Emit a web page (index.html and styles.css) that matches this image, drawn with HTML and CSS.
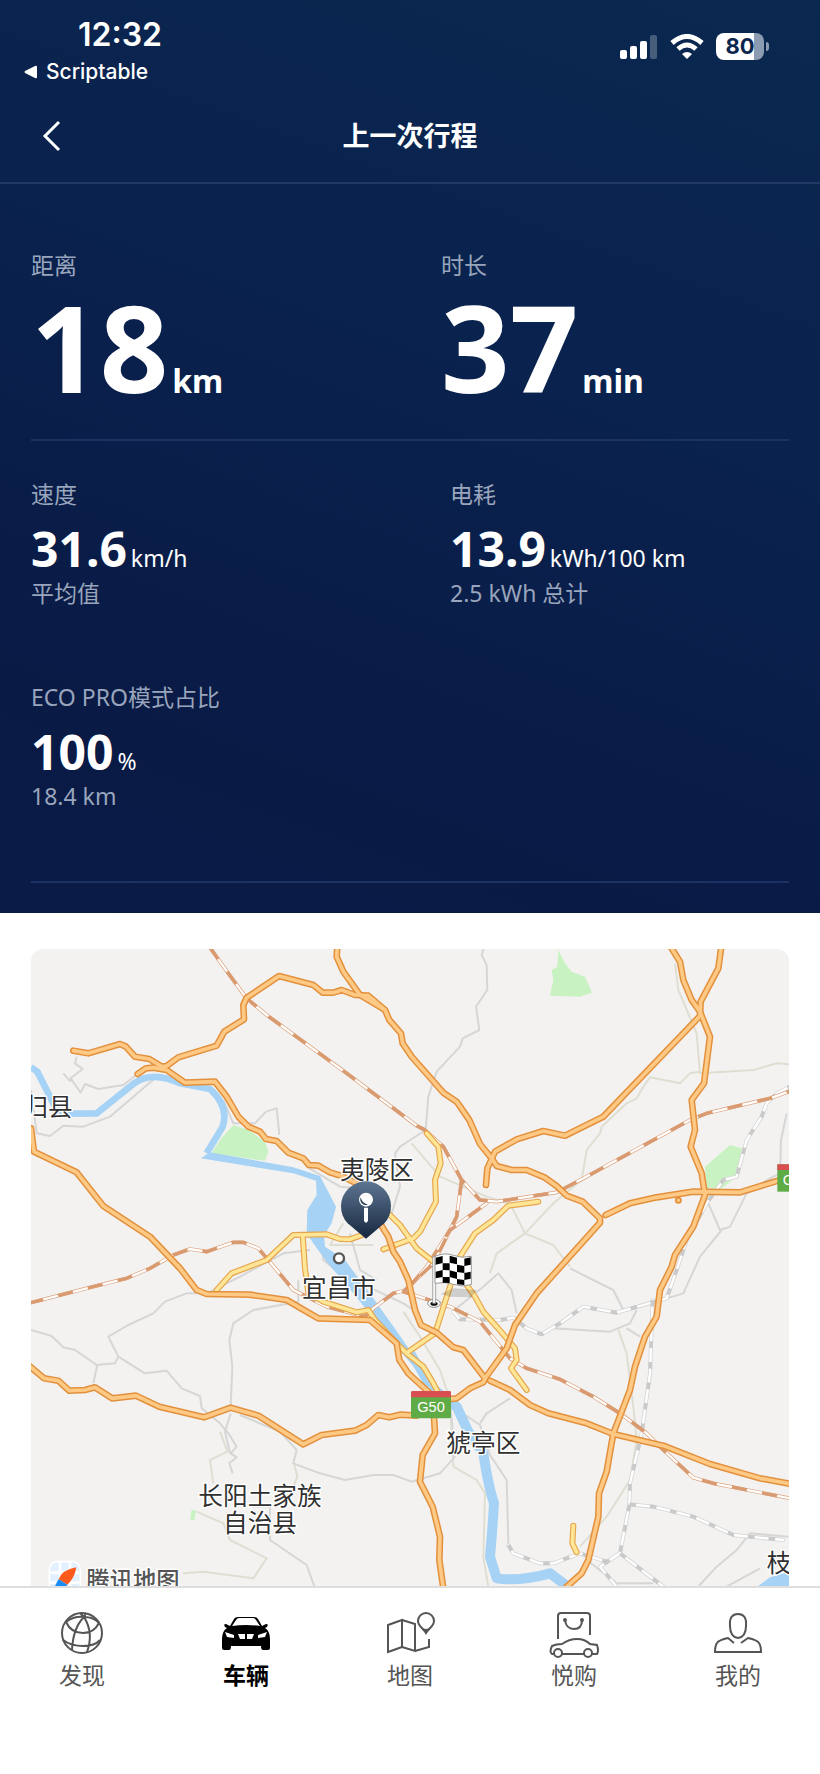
FILE: index.html
```html
<!DOCTYPE html>
<html lang="zh-CN">
<head>
  <meta charset="UTF-8">
  <meta name="viewport" content="width=device-width, initial-scale=1.0">
  <title>上一次行程</title>
  <link rel="stylesheet" href="styles.css">
</head>
<body>
  <div class="panel">
    <div class="status">
      <div class="status-left">
        <div class="time">12:32</div>
        <a class="back-app" href="#">
          <svg width="14" height="14" viewBox="0 0 14 14"><path d="M13 2v10q0 2-2 1L1 8q-1-1 0-2l10-5q2-1 2 1z" fill="#fff"/></svg>
          Scriptable
        </a>
      </div>
      <div class="status-right">
        <svg width="38" height="26" viewBox="0 0 38 26" fill="#fff">
          <rect x="0" y="16" width="7" height="9" rx="2"/>
          <rect x="10" y="12" width="7" height="13" rx="2"/>
          <rect x="20" y="7" width="7" height="18" rx="2"/>
          <rect x="30" y="1" width="7" height="24" rx="2" opacity=".25"/>
        </svg>
        <svg width="34" height="26" viewBox="0 0 34 26" fill="none" stroke="#fff" stroke-width="5">
          <path d="M2 9Q17-4 32 9"/>
          <path d="M8 15q9-8 18 0"/>
          <path d="M17 25l-5-5q5-4 10 0z" fill="#fff" stroke="none"/>
        </svg>
        <div class="battery"><span>80</span></div>
      </div>
    </div>

    <header class="header">
      <button class="back" aria-label="返回">
        <svg width="20" height="32" viewBox="0 0 20 32" fill="none" stroke="#fff" stroke-width="3"><path d="M17 2L3 16l14 14"/></svg>
      </button>
      <h1>上一次行程</h1>
    </header>

    <main class="stats">
      <section class="row row-main">
        <div>
          <div class="label">距离</div>
          <div class="big">18 <span>km</span></div>
        </div>
        <div>
          <div class="label">时长</div>
          <div class="big">37 <span>min</span></div>
        </div>
      </section>
      <section class="row row-detail">
        <div>
          <div class="label">速度</div>
          <div class="value">31.6 <span>km/h</span></div>
          <div class="label">平均值</div>
        </div>
        <div class="shifted">
          <div class="label">电耗</div>
          <div class="value">13.9 <span>kWh/100 km</span></div>
          <div class="label">2.5 kWh 总计</div>
        </div>
        <div>
          <div class="label">ECO PRO模式占比</div>
          <div class="value">100 <span>%</span></div>
          <div class="label">18.4 km</div>
        </div>
      </section>
    </main>
  </div>

  <div class="map">
    <svg viewBox="33 27 2274 1911">
      <defs>
        <linearGradient id="pinFill" x1="0" y1="0" x2="0" y2="1">
          <stop offset="0" stop-color="#5d7591"/>
          <stop offset="1" stop-color="#16263f"/>
        </linearGradient>
        <!-- roads are drawn twice: dark edge, then lighter fill -->
        <g id="highways">
          <path d="M160 332L205 340L300 312L318 320L345 350L388 357L425 380L440 378L475 352L590 317L613 275L672 238L670 195L680 173L777 108L880 135L908 158L940 158L965 150L1005 165L1045 167L1095 210L1108 240L1143 280L1148 310L1175 350L1270 458L1310 485L1348 540L1380 612L1415 655L1430 678L1475 690L1520 690L1575 713L1610 738L1640 767L1688 785L1740 835V848L1550 1060L1485 1155L1460 1225L1395 1315L1390 1327L1350 1345L1310 1375L1280 1378"/>
          <path d="M952 20L950 50L970 95L1020 165L1095 210"/>
          <path d="M353 402L378 385L400 383L440 390L495 428L585 425L620 470L655 530L685 560L720 575L738 597L770 603L805 638L850 655L867 675L895 677L930 697L965 708L1020 735L1080 850L1105 890L1120 935L1140 965L1165 1020L1185 1110L1203 1155L1250 1178L1300 1222L1330 1230L1395 1315"/>
          <path d="M33 565L42 635L170 697L250 798L390 890L480 985L530 1050L560 1062L690 1064L800 1080L895 1135L1050 1140L1130 1210L1138 1260L1165 1300L1230 1360L1242 1430L1245 1480L1208 1545L1200 1625L1238 1700L1260 1790L1258 1860L1270 1945"/>
          <path d="M25 1275L72 1315L115 1322L148 1352L195 1350L225 1342L277 1375L348 1367L418 1400L552 1432L632 1403L715 1427L850 1513L905 1485L1005 1472L1040 1455L1075 1425L1108 1432L1140 1424L1190 1427"/>
          <path d="M1952 20L1980 65L1990 120L2015 180L2040 215L2070 290L2052 430L2015 480L2025 570L2012 620L2045 700L2055 765L2020 860L1965 945L1955 980L1920 1050L1910 1130L1875 1190L1845 1280L1830 1350L1780 1480L1760 1595L1737 1660L1735 1730L1705 1860L1685 1900L1635 1945"/>
          <path d="M2104 20L2095 85L2042 185L2040 228L1750 530L1635 587L1570 573L1490 598L1425 635L1402 685L1398 735"/>
          <path d="M1757 825L1830 790L1910 772L2020 755L2160 757L2320 708"/>
          <path d="M1410 1322L1470 1350L1530 1395L1585 1420L1700 1450L1780 1482L1930 1517L2070 1572L2220 1615L2320 1633"/>
        </g>
        <g id="mainroads">
          <path d="M590 1050L635 1000L740 960L820 885L920 883L960 897L990 898L1040 880"/>
          <path d="M848 885L855 985L865 1060L910 1085L1010 1117L1045 1110L1065 1140L1130 1210L1160 1240L1210 1280L1240 1330L1260 1370"/>
          <path d="M1220 580L1255 620L1262 670L1245 720L1248 785L1200 875L1180 895L1090 928"/>
          <path d="M1110 825L1140 855L1190 925L1240 965"/>
          <path d="M1555 785L1465 797L1420 840L1365 880L1320 950L1290 1040L1245 1180L1165 1235"/>
          <path d="M1340 1035L1365 1070L1390 1115L1430 1160L1485 1225L1490 1260L1473 1285L1520 1350"/>
          <path d="M1660 1757L1657 1810L1670 1837"/>
        </g>
        <g id="rails">
          <path d="M568 20L625 100L680 175L740 225L980 400L1190 557L1215 570L1270 620L1325 720L1380 780L1430 785L1610 757L1685 718L2010 540L2060 520L2250 475L2320 450"/>
          <path d="M25 1090L200 1045L320 1015L390 985L460 945L510 927L560 935L640 907L670 907L715 925L770 990L820 1050L920 1100L1035 1130L1060 1105L1120 1060L1160 1050L1220 980L1290 870L1345 830L1400 790"/>
          <path d="M1325 720L1310 830L1240 970L1150 1055L1290 1100L1380 1145L1470 1255L1520 1285L1620 1318L1720 1370L1800 1420L1880 1480L1930 1530L2020 1613L2080 1630L2320 1677"/>
        </g>
        <g id="greyrails">
          <path d="M2320 435L2270 460L2240 490L2225 530L2180 600L2150 710L2110 720L2060 790L2000 900L1970 990L1940 1075L1870 1095L1790 1118L1690 1100L1620 1150L1565 1183L1520 1165L1480 1133L1440 1140L1320 1138L1300 1115"/>
          <path d="M1898 1080L1890 1300L1865 1480L1830 1630L1828 1695L1800 1840L1740 1880L1790 1940"/>
          <path d="M1828 1693L1900 1700L2020 1730L2140 1785L2290 1800"/>
          <path d="M1465 1815L1480 1840L1560 1870L1600 1870L1680 1840L1760 1865L1800 1840L1930 1940"/>
        </g>
      </defs>

      <g class="park">
        <path d="M640 555L685 570L735 605L745 635L735 662L575 640L600 600Z"/>
        <path d="M1615 30L1635 70L1655 95L1695 110L1716 158L1680 170L1590 167L1600 120L1595 90L1612 80Z"/>
        <path d="M2055 680L2130 615L2165 625L2150 710L2105 745H2060Z"/>
        <path d="M515 1708L528 1712L523 1742L510 1738Z"/>
      </g>

      <g class="street beige">
        <path d="M1965 70L1975 150L2030 280L2040 400L2200 390L2270 370L2307 373"/>
        <path d="M2040 395L2010 400L1980 430L1890 412L1870 440L1850 475L1820 490L1745 560L1740 580L1700 630L1685 720L1600 790L1515 880L1430 940L1410 1000"/>
        <path d="M1175 610L1260 710L1400 770L1470 790L1515 880L1600 915L1650 980"/>
        <path d="M1795 1170L1820 1240L1840 1400L1850 1500L1830 1620L1760 1730L1680 1820"/>
        <path d="M1150 1115L1200 1190L1260 1290L1290 1380L1300 1580L1370 1620L1395 1660L1390 1850L1405 1940"/>
        <path d="M600 1475L622 1535L570 1560L580 1630M822 1570L832 1610L820 1640"/>
        <path d="M530 1715L610 1750L630 1800L740 1855L700 1915L550 1895L490 1900"/>
        <path d="M970 850L930 915L1060 915"/>
      </g>
      <g class="street grey">
        <path d="M1392 20L1385 45L1400 75L1402 150L1368 200L1378 270L1328 295L1320 320L1250 395L1225 470L1217 570L1140 620L1125 640L1140 740L1115 820"/>
        <path d="M170 350L165 370L188 387L152 415L182 458L195 432L235 447L310 435L353 402M130 400L152 425"/>
        <path d="M33 450L50 580L90 588L130 557L190 560L270 530L340 470L410 410L480 432"/>
        <path d="M610 480L640 550L705 550L738 515L770 505L778 585"/>
        <path d="M860 680L960 740L1020 745"/>
        <path d="M33 1170L95 1188L130 1222L165 1230L230 1275L285 1270L295 1250L265 1190L325 1155L400 1120L435 1085L500 1060L560 1060L650 1015L790 940L870 930"/>
        <path d="M295 1250L375 1300L440 1292L485 1345L540 1368L545 1405L600 1450L625 1480L650 1520L632 1540L650 1552L628 1570L638 1600"/>
        <path d="M232 1275L220 1330M632 1420L615 1475L630 1540"/>
        <path d="M632 1400L637 1280L628 1200L640 1150L700 1110L835 1085V1020"/>
        <path d="M660 1425L780 1475L830 1530L820 1570L900 1600L975 1620L1060 1605L1120 1605L1175 1625L1260 1600L1305 1550L1290 1380"/>
        <path d="M700 1700H750V1800L860 1875L885 1945"/>
        <path d="M1290 1395L1380 1455L1410 1545L1460 1620L1465 1810M1380 1450L1400 1420L1470 1375"/>
        <path d="M1310 1105L1390 1040L1435 1000L1475 1050L1490 1120"/>
        <path d="M1650 985L1780 1050L1810 1110M1600 1165L1770 1175L1830 1150L1850 1110M1820 1165L1860 1190"/>
        <path d="M2300 520L2283 600L2280 700L2250 715L2180 760L2130 860L2100 870L2065 790M2105 870L2040 950L1990 1060L1940 1075"/>
        <path d="M2305 1790L2190 1780L2150 1830L2090 1880L2030 1945M2120 1940L2220 1885M1700 1860L1790 1930H1900"/>
        <path d="M905 900L910 960L960 1000L1150 1090L1180 1110M990 880L1020 990L1070 1020"/>
      </g>

      <g class="river">
        <path d="M33 382L52 395L95 480L110 510L160 521L230 520L345 428Q400 392 480 430L570 447Q628 500 608 560L560 640" stroke-width="20"/>
        <path d="M542 655L570 637L820 682L900 708L948 800L935 850L912 885L915 920L975 960L1060 1075L1145 1195L1210 1290L1190 1290L1100 1185L1000 1060L920 965L880 910L860 880L862 810L890 765L888 722L820 700Z" stroke="none" fill="#a5d2f5"/>
        <path d="M1170 1235L1230 1340" stroke-width="26"/>
        <path d="M1230 1340L1310 1400L1345 1475L1390 1540Q1405 1640 1422 1690Q1418 1760 1410 1850L1430 1915Q1500 1925 1590 1900L1650 1945" stroke-width="30"/>
        <path d="M2205 1945L2250 1912L2307 1895V1945Z" stroke="none" fill="#a5d2f5"/>
      </g>

      <use href="#greyrails" class="line greyrail-edge"/>
      <use href="#greyrails" class="line rail-fill"/>
      <use href="#greyrails" class="line greyrail-dash"/>
      <use href="#rails" class="line rail-edge"/>
      <use href="#rails" class="line rail-fill"/>
      <use href="#rails" class="line rail-dash"/>
      <use href="#mainroads" class="line mainroad-edge"/>
      <use href="#mainroads" class="line mainroad-fill"/>
      <use href="#highways" class="line highway-edge"/>
      <use href="#highways" class="line highway-fill"/>
      <circle cx="1975" cy="781" r="8" fill="#fbc882" stroke="#e3903c" stroke-width="5"/>

      <!-- road signs -->
      <g class="sign">
        <rect x="1173" y="1353" width="120" height="82" rx="5" fill="#5fab46"/>
        <path d="M1173 1372v-14q0-5 5-5h110q5 0 5 5v14z" fill="#d94f51"/>
        <text x="1233" y="1416" text-anchor="middle">G50</text>
        <rect x="2272" y="673" width="60" height="82" fill="#5fab46"/>
        <path d="M2272 673h60v17h-60z" fill="#d94f51"/>
        <text x="2288" y="736">G50</text>
      </g>

      <g class="place">
        <text x="10" y="528">归县</text>
        <text x="1071" y="718" text-anchor="middle">夷陵区</text>
        <text x="957" y="1070" text-anchor="middle">宜昌市</text>
        <text x="1390" y="1536" text-anchor="middle">猇亭区</text>
        <text x="720" y="1695" text-anchor="middle">长阳土家族</text>
        <text x="720" y="1775" text-anchor="middle">自治县</text>
        <text x="2240" y="1896">枝江</text>
      </g>
      <circle cx="957" cy="955" r="15" fill="#fff" stroke="#555" stroke-width="7"/>

      <!-- start pin -->
      <path d="M1038 896L983 850A75 75 0 1 1 1093 850Z" fill="url(#pinFill)"/>
      <circle cx="1038" cy="779" r="21" fill="#fff"/>
      <path d="M1022 772a17 17 0 0 0 22 22q-18-4-22-22z" fill="#31455f"/>
      <path d="M1032 803h12v40l-6 6l-6-6z" fill="#fff"/>

      <!-- finish flag -->
      <g>
        <path d="M1262 1062L1300 1045L1370 1050L1355 1072L1290 1070Z" fill="#000" opacity=".15"/>
        <ellipse cx="1242" cy="1090" rx="19" ry="12" fill="#fff" stroke="#888" stroke-width="3"/>
        <ellipse cx="1242" cy="1091" rx="11" ry="6" fill="#111"/>
        <path d="M1238 950h9v140h-9z" fill="#f4f4f4" stroke="#888" stroke-width="2"/>
        <path d="M1245 949Q1275 936 1300 946T1354 949V1034Q1325 1042 1300 1033T1245 1030Z" fill="#fff" stroke="#999" stroke-width="3"/>
        <path d="M1247 953l21-5v21l-21 5zM1289 947l22 6v20l-22-5zM1333 956l19-4v22l-19 4zM1268 970l21 0v21l-21-1zM1311 974l22 4v21l-22-3zM1247 995l21-5v21l-21 4zM1289 991l22 6v20l-22-6zM1333 999l19-4v21l-19 4zM1268 1011l21 0v18l-21-1zM1311 1017l22 3v15l-22-2z" fill="#000"/>
      </g>

      <!-- map provider -->
      <rect x="88" y="1865" width="93" height="93" rx="24" fill="#e3f0ff" stroke="#fff" stroke-width="5"/>
      <path d="M88 1898h90M120 1867v80M150 1867v80M88 1928h90" stroke="#fff" stroke-width="8"/>
      <path d="M169 1882Q125 1890 116 1918L142 1934Q164 1915 169 1882Z" fill="#fb5a1c"/>
      <path d="M116 1918L142 1934Q130 1955 98 1962Q104 1935 116 1918Z" fill="#1b8df5"/>
      <text class="provider" x="199" y="1946">腾讯地图</text>
    </svg>
  </div>

  <nav class="tabs">
    <a href="#">
      <svg viewBox="0 0 50 48">
        <circle cx="25" cy="24" r="20"/>
        <path d="M9 13Q14 24 26 24Q37 24 42 14M6 31Q14 37 26 37Q38 37 43 31M27 8Q16 19 15 41M27 8Q37 24 30 43M27 8Q17 7 9 13M27 8Q37 8 42 14M27 8L23 4M27 8L29 4"/>
      </svg>
      <span>发现</span>
    </a>
    <a href="#" class="active">
      <svg viewBox="0 0 50 48">
        <path d="M9 17L13 10Q14 8 17 8H33Q36 8 37 10L41 17L45 15Q48 15 46 18L44 19Q49 22 49 30V39Q49 41 47 41H42Q40 41 40 37H10Q10 41 8 41H3Q1 41 1 39V30Q1 22 6 19L4 18Q2 15 5 15Z" fill="#000" stroke="none"/>
        <path d="M11 17L15 11Q16 9 18 9H32Q34 9 35 11L39 17Q25 15 11 17Z" fill="#fff" stroke="none"/>
        <path d="M4 23L13 26V29L6 28ZM46 23L37 26V29L44 28ZM17 25H24V30H19ZM26 25H33L31 30H26Z" fill="#fff" stroke="none"/>
      </svg>
      <span>车辆</span>
    </a>
    <a href="#">
      <svg viewBox="0 0 50 48">
        <path d="M3 16L17 11V38L3 43ZM17 11L30 15V42L17 38M30 42L44 38V30M33 12a8 8 0 1 1 16 0c0 5-5 7-8 12c-3-5-8-7-8-12z"/>
        <path d="M36 18q5 4 10 0l-5 7z" fill="#555" stroke="none"/>
      </svg>
      <span>地图</span>
    </a>
    <a href="#">
      <svg viewBox="0 0 50 48">
        <path d="M9 30V7Q9 4 12 4H38Q41 4 41 7V26M16 11Q17 20 25 20T33 11"/>
        <circle cx="16" cy="11" r="1"/>
        <circle cx="33" cy="11" r="1"/>
        <path d="M5 45H3Q0 43 3 37Q7 35 13 35Q20 30 28 30Q36 30 41 35L48 36Q50 42 48 45H43M13 45H35"/>
        <circle cx="9" cy="44" r="4"/>
        <circle cx="39" cy="44" r="4"/>
      </svg>
      <span>悦购</span>
    </a>
    <a href="#">
      <svg viewBox="0 0 50 48">
        <path d="M25 5Q34 5 33 17Q33 28 25 29Q17 28 17 17Q16 5 25 5ZM21 34L15 29Q6 31 4 34Q2 37 2 43H48Q48 37 46 34Q44 31 35 29L28 34"/>
      </svg>
      <span>我的</span>
    </a>
  </nav>
</body>
</html>
```

FILE: styles.css
```css
body {
  margin: 0;
  min-height: 100vh;
  background: #fff;
  font-family: "Noto Sans", "Noto Sans CJK SC", sans-serif;
  display: flex;
  flex-direction: column;
}

a {
  color: inherit;
  text-decoration: none;
}

.panel {
  background: linear-gradient(200deg, #0a2850 0%, #0a224e 40%, #091a45 80%, #091b46 100%);
  color: #fff;
}

/* status bar */
.status {
  display: flex;
  justify-content: space-between;
  padding: 15px 56px 0 24px;
  font-family: Inter, sans-serif;
}

.time {
  margin-left: 54px;
  font-size: 32px;
  line-height: 40px;
  font-weight: 600;
}

.back-app {
  display: flex;
  align-items: center;
  gap: 8px;
  font-size: 21px;
  line-height: 34px;
  font-weight: 500;
}

.status-right {
  display: flex;
  align-items: center;
  align-self: flex-start;
  gap: 12px;
  padding-top: 18px;
}

.battery {
  position: relative;
  width: 48px;
  line-height: 27px;
  border-radius: 8px;
  background: linear-gradient(to right, #fff 80%, #8b9bb2 80%);
  color: #0a264f;
  font-size: 22px;
  font-weight: 700;
  text-align: center;
}

.battery::after {
  content: "";
  position: absolute;
  right: -5px;
  top: 9px;
  width: 3px;
  height: 9px;
  border-radius: 0 4px 4px 0;
  background: #8b9bb2;
}

/* title bar */
.header {
  display: grid;
  grid-template-columns: 1fr auto 1fr;
  align-items: center;
  height: 93px;
  border-bottom: 2px solid #213a65;
}

.back {
  justify-self: start;
  margin-left: 42px;
  padding: 0;
  border: none;
  background: none;
  line-height: 0;
  cursor: pointer;
}

.header h1 {
  margin: 0;
  font-size: 27px;
  line-height: 40px;
  font-weight: 600;
}

/* trip figures */
.stats {
  padding: 0 31px 30px;
}

.row {
  display: grid;
  grid-template-columns: 1fr 1fr;
  border-bottom: 2px solid #1c3262;
}

.row-main {
  column-gap: 62px;
  padding: 64px 0 27px;
}

.row-detail {
  column-gap: 62px;
  row-gap: 70px;
  padding: 36px 0 68px;
}

.shifted {
  margin-left: 9px;
}

.label {
  color: #99a5bc;
  font-size: 23px;
  line-height: 34px;
}

.big {
  font-size: 120px;
  line-height: 130px;
  font-weight: 700;
}

.value {
  margin-top: 11px;
  font-size: 48px;
  line-height: 54px;
  font-weight: 700;
}

.big,
.value {
  display: flex;
  align-items: baseline;
  gap: 4px;
}

.big span {
  font-size: 32px;
  line-height: 32px;
}

.value span {
  font-size: 23px;
  line-height: 24px;
  font-weight: 400;
}

/* map */
.map {
  margin: 36px 31px 0;
  border-radius: 12px 12px 0 0;
  overflow: hidden;
  background: #f3f2f0;
}

.map svg {
  display: block;
  width: 100%;
}

.park {
  fill: #c8f2c2;
}

.street {
  fill: none;
  stroke-width: 6;
  stroke-linejoin: round;
}

.grey {
  stroke: #d6d6d6;
}

.beige {
  stroke: #dfded2;
}

.river {
  fill: none;
  stroke: #a5d2f5;
  stroke-linejoin: round;
}

.line {
  fill: none;
  stroke-linejoin: round;
  stroke-linecap: round;
}

.highway-edge {
  stroke: #e3903c;
  stroke-width: 20;
}

.highway-fill {
  stroke: #fdc985;
  stroke-width: 11;
}

.mainroad-edge {
  stroke: #e5a54c;
  stroke-width: 18;
}

.mainroad-fill {
  stroke: #ffe596;
  stroke-width: 11;
}

.rail-edge {
  stroke: #dda07a;
  stroke-width: 11;
}

.rail-fill {
  stroke: #fff;
  stroke-width: 7;
}

.rail-dash {
  stroke: #d99a70;
  stroke-width: 10;
  stroke-linecap: butt;
  stroke-dasharray: 46 46;
}

.greyrail-edge {
  stroke: #d6d6d6;
  stroke-width: 12;
}

.greyrail-dash {
  stroke: #cacaca;
  stroke-width: 11;
  stroke-linecap: butt;
  stroke-dasharray: 20 42;
}

.sign {
  fill: #fff;
  font-family: "Liberation Sans", sans-serif;
  font-size: 44px;
}

.place,
.provider {
  fill: #303030;
  stroke: #fff;
  stroke-width: 8;
  paint-order: stroke;
  font-family: "Noto Sans CJK SC", sans-serif;
  font-size: 74px;
}

.provider {
  fill: #555;
  font-size: 70px;
  font-weight: 500;
}

/* bottom tabs */
.tabs {
  flex: 1;
  display: grid;
  grid-template-columns: repeat(5, 1fr);
  align-items: start;
  border-top: 2px solid #dedede;
  padding-top: 20px;
  background: #fff;
}

.tabs a {
  display: flex;
  flex-direction: column;
  align-items: center;
  color: #555;
  font-size: 23px;
  line-height: 34px;
}

.tabs svg {
  width: 50px;
  height: 50px;
  fill: none;
  stroke: #555;
  stroke-width: 2;
}

.tabs .active {
  color: #000;
  font-weight: 700;
}
```
